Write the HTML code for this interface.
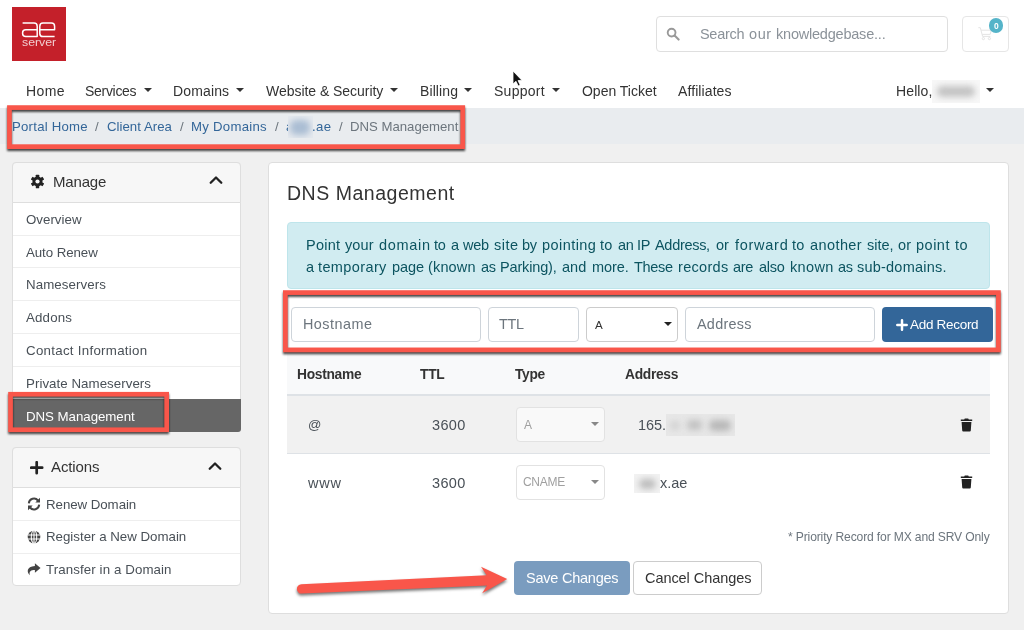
<!DOCTYPE html>
<html><head><meta charset="utf-8">
<style>
*{box-sizing:border-box;margin:0;padding:0}
html,body{width:1024px;height:630px;overflow:hidden}
body{font-family:"Liberation Sans",sans-serif;background:#f0f0f0;position:relative;color:#333}
.a,.t,svg{position:absolute}
.t{white-space:nowrap;will-change:transform}
.caret{width:0;height:0;border-left:4.3px solid transparent;border-right:4.3px solid transparent;border-top:4.6px solid #333}
.red{border:4.7px solid #f9564a;filter:drop-shadow(0.6px 2.2px 1.6px rgba(0,0,0,.75))}
.card{background:#fff;border:1px solid #dedede;border-radius:4px}
.ch{background:#f7f7f7;border:1px solid #dedede;border-radius:4px 4px 0 0}
.sep{height:1px;background:#eee;left:13px;width:227.2px}
.inp{background:#fff;border:1px solid #ced4da;border-radius:4px}
.blur{filter:blur(3px)}.bp{overflow:hidden}
</style></head><body>
<!-- header -->
<div class="a" style="left:0;top:0;width:1024px;height:108px;background:#fff"></div>
<div class="a" style="left:11.8px;top:6.9px;width:53.8px;height:53.8px;background:#c4202a"></div>
<svg style="left:0;top:0" width="80" height="70" viewBox="0 0 80 70" fill="none" stroke="#fff" stroke-width="1.5" stroke-linejoin="round">
<path d="M22.6,23.1 H34 Q37.2,23.1 37.2,26.3 V36.6 H25.8 Q22.6,36.6 22.6,33.6 V32.7 Q22.6,29.7 25.8,29.7 H37.2"/>
<path d="M54.6,36.6 H43 Q39.8,36.6 39.8,33.4 V26.3 Q39.8,23.1 43,23.1 H51.4 Q54.6,23.1 54.6,26.3 V29.7 H39.8"/>
</svg>
<div class="t" style="left:21.7px;top:35.9px;font-size:10.8px;line-height:12px;color:#fff;letter-spacing:0px;opacity:.78;transform-origin:0 0;transform:scale(1.14,1)">server</div>
<!-- search -->
<div class="a inp" style="left:655.7px;top:16px;width:292px;height:36px;border-color:#dfdfdf"></div>
<svg style="left:666px;top:27px" width="14" height="14" viewBox="0 0 14 14"><circle cx="5.6" cy="5.6" r="3.9" fill="none" stroke="#999" stroke-width="1.9"/><path d="M8.6,8.6 L12.6,12.6" stroke="#999" stroke-width="2.1" stroke-linecap="round"/></svg>
<div class="a inp" style="left:962px;top:16px;width:47px;height:36px;border-color:#e6e6e6"></div>
<svg style="left:975px;top:24px" width="20" height="18" viewBox="975 24 20 18" fill="none" stroke="#e4e4e4" stroke-width="1"><path d="M978.3,27.7 H980.3 L982.6,36.4 H990.4 M981,30.2 H991.3 L990.2,34.4 H982.1"/><circle cx="983.4" cy="38.6" r="1.1"/><circle cx="989.4" cy="38.6" r="1.1"/></svg>
<div class="a" style="left:989.3px;top:18.4px;width:14.2px;height:14.2px;border-radius:7.1px;background:#55b4c9"></div>
<!-- carets -->
<div class="a caret" style="left:144.2px;top:88.3px"></div>
<div class="a caret" style="left:235.7px;top:88.3px"></div>
<div class="a caret" style="left:390.3px;top:88.3px"></div>
<div class="a caret" style="left:464.1px;top:88.3px"></div>
<div class="a caret" style="left:551.5px;top:88.3px"></div>
<div class="a caret" style="left:985.8px;top:88.3px"></div>
<!-- cursor -->
<svg style="left:511px;top:69.3px" width="14" height="20" viewBox="0 0 14 20"><path d="M2,2 L2,15 L5,12.3 L7.2,17 L9.2,16 L7,11.6 L11,11.4 Z" fill="#111" stroke="#fff" stroke-width="0.8"/></svg>
<!-- breadcrumb -->
<div class="a" style="left:0;top:107.7px;width:1024px;height:36.2px;background:#e9ecef"></div>
<!-- sidebar card 1 -->
<div class="a card" style="left:12px;top:162.3px;width:229.2px;height:270px"></div>
<div class="a ch" style="left:12px;top:162.3px;width:229.2px;height:40.5px"></div>
<div class="a sep" style="top:234.6px"></div>
<div class="a sep" style="top:267.3px"></div>
<div class="a sep" style="top:300.1px"></div>
<div class="a sep" style="top:332.9px"></div>
<div class="a sep" style="top:365.8px"></div>
<div class="a" style="left:12px;top:399.2px;width:229.2px;height:32.4px;background:#666;border-radius:0 0 3px 3px"></div>
<!-- gear -->
<svg style="left:30px;top:174px" width="15" height="15" viewBox="-7.5 -7.5 15 15"><g fill="#222"><circle r="5"/><g id="tth"><rect x="-1.7" y="-6.8" width="3.4" height="13.6" rx="0.6"/></g><use href="#tth" transform="rotate(60)"/><use href="#tth" transform="rotate(120)"/></g><circle r="2.1" fill="#f7f7f7"/></svg>
<!-- chevrons -->
<svg style="left:208.6px;top:174.9px" width="14" height="10" viewBox="0 0 14 10"><path d="M1.7,7.8 L7,2.5 L12.3,7.8" fill="none" stroke="#222" stroke-width="2.3" stroke-linecap="round" stroke-linejoin="round"/></svg>
<!-- actions card -->
<div class="a card" style="left:12px;top:447.3px;width:229.2px;height:139px"></div>
<div class="a ch" style="left:12px;top:447.3px;width:229.2px;height:40.4px"></div>
<div class="a sep" style="top:519.8px"></div>
<div class="a sep" style="top:552.8px"></div>
<svg style="left:30px;top:460.7px" width="14" height="14" viewBox="0 0 14 14"><path d="M6.7,1.2V12.2M1.2,6.7H12.2" stroke="#222" stroke-width="2.7" stroke-linecap="round"/></svg>
<svg style="left:208.4px;top:460.9px" width="14" height="10" viewBox="0 0 14 10"><path d="M1.7,7.8 L7,2.5 L12.3,7.8" fill="none" stroke="#222" stroke-width="2.3" stroke-linecap="round" stroke-linejoin="round"/></svg>
<!-- action icons -->
<svg style="left:27px;top:497.2px" width="14" height="14" viewBox="0 0 14 14" fill="none" stroke="#444" stroke-width="2"><path d="M1.8,6.3 A5.2,5.2 0 0 1 11,3.5"/><path d="M12.2,7.7 A5.2,5.2 0 0 1 3,10.5"/><path d="M13,0.7 V5.4 H8.3Z" fill="#444" stroke="none"/><path d="M1,13.3 V8.6 H5.7Z" fill="#444" stroke="none"/></svg>
<svg style="left:26.5px;top:529.5px" width="14" height="14" viewBox="0 0 14 14"><circle cx="7" cy="7" r="6.3" fill="#444"/><g fill="none" stroke="#fff" stroke-width="1.05"><ellipse cx="7" cy="7" rx="2.7" ry="6.3"/><path d="M0.7,5H13.3M0.7,9H13.3M7,0.7V13.3"/></g></svg>
<svg style="left:26px;top:562.2px" width="15.2" height="15.2" viewBox="0 0 14 14"><path d="M8.2,1.2 L13.4,5.6 L8.2,10 V7.4 C4.6,7.4 2.6,8.6 3.6,12.3 C0.6,10 0.2,4.1 8.2,3.8 Z" fill="#444"/></svg>
<!-- main card -->
<div class="a card" style="left:268px;top:162.3px;width:741px;height:451.8px"></div>
<div class="a" style="left:286.5px;top:222px;width:703px;height:67px;background:#d1ecf1;border:1px solid #bee5eb;border-radius:4px"></div>
<!-- form -->
<div class="a inp" style="left:291px;top:306.6px;width:190px;height:35px"></div>
<div class="a inp" style="left:488px;top:306.6px;width:91.3px;height:35px"></div>
<div class="a inp" style="left:585.7px;top:306.6px;width:92.5px;height:35px;border-color:#ccc"></div>
<div class="a caret" style="left:663.6px;top:322.3px;border-top-color:#222"></div>
<div class="a inp" style="left:685px;top:306.6px;width:190.4px;height:35px"></div>
<div class="a" style="left:882px;top:306.6px;width:110.5px;height:35px;background:#336699;border-radius:4px"></div>
<svg style="left:896.4px;top:318.7px" width="12" height="12" viewBox="0 0 12 12"><path d="M6,1.3V10.7M1.3,6H10.7" stroke="#fff" stroke-width="2.5" stroke-linecap="round"/></svg>
<!-- table -->
<div class="a" style="left:286.5px;top:353px;width:703.3px;height:41.5px;background:#f8f9fa"></div>
<div class="a" style="left:286.5px;top:394px;width:703.3px;height:2px;background:#dee2e6"></div>
<div class="a" style="left:286.5px;top:396px;width:703.3px;height:57px;background:#f1f1f1"></div>
<div class="a" style="left:286.5px;top:453px;width:703.3px;height:1px;background:#dee2e6"></div>
<div class="a inp" style="left:515.7px;top:407.2px;width:89.3px;height:35px;border-color:#e2e2e2;background:#f9f9f9"></div>
<div class="a inp" style="left:515.7px;top:464.6px;width:89.3px;height:35.2px;border-color:#e2e2e2"></div>
<div class="a caret" style="left:590.8px;top:422px;border-top-color:#888;border-left-width:4.6px;border-right-width:4.6px"></div>
<div class="a caret" style="left:590.8px;top:479.5px;border-top-color:#888;border-left-width:4.6px;border-right-width:4.6px"></div>
<svg style="left:959.8px;top:417.5px" width="13" height="14" viewBox="0 0 13 14"><path d="M0.8,1.6 H4.2 L4.8,0.5 H8.2 L8.8,1.6 H12.2 V3 H0.8Z M1.6,3.9 H11.4 L10.8,12.6 Q10.7,13.5 9.8,13.5 H3.2 Q2.3,13.5 2.2,12.6Z" fill="#222"/></svg>
<svg style="left:959.8px;top:474.8px" width="13" height="14" viewBox="0 0 13 14"><path d="M0.8,1.6 H4.2 L4.8,0.5 H8.2 L8.8,1.6 H12.2 V3 H0.8Z M1.6,3.9 H11.4 L10.8,12.6 Q10.7,13.5 9.8,13.5 H3.2 Q2.3,13.5 2.2,12.6Z" fill="#222"/></svg>
<!-- buttons -->
<div class="a" style="left:514px;top:560.6px;width:115.8px;height:34.4px;background:#7a9cbf;border-radius:4px"></div>
<div class="a inp" style="left:633.4px;top:560.6px;width:128.6px;height:34.4px;border-color:#ccc"></div>
<div class="t" style="left:26.25px;top:83.00px;font-size:14px;line-height:17px;color:#333;font-weight:400;letter-spacing:0.367px">Home</div>
<div class="t" style="left:85.22px;top:83.00px;font-size:14px;line-height:17px;color:#333;font-weight:400;letter-spacing:-0.300px">Services</div>
<div class="t" style="left:173.00px;top:83.00px;font-size:14px;line-height:17px;color:#333;font-weight:400;letter-spacing:0.142px">Domains</div>
<div class="t" style="left:266.00px;top:83.00px;font-size:14px;line-height:17px;color:#333;font-weight:400;letter-spacing:-0.038px">Website &amp; Security</div>
<div class="t" style="left:419.75px;top:83.00px;font-size:14px;line-height:17px;color:#333;font-weight:400;letter-spacing:0.100px">Billing</div>
<div class="t" style="left:493.50px;top:83.00px;font-size:14px;line-height:17px;color:#333;font-weight:400;letter-spacing:0.267px">Support</div>
<div class="t" style="left:581.50px;top:83.00px;font-size:14px;line-height:17px;color:#333;font-weight:400;letter-spacing:-0.015px">Open Ticket</div>
<div class="t" style="left:677.50px;top:83.00px;font-size:14px;line-height:17px;color:#333;font-weight:400;letter-spacing:0.094px">Affiliates</div>
<div class="t" style="left:895.50px;top:83.00px;font-size:14px;line-height:17px;color:#333;font-weight:400;letter-spacing:0.120px">Hello,</div>
<div class="t" style="left:12.00px;top:119.00px;font-size:13.2px;line-height:16px;color:#369;font-weight:400;letter-spacing:0.235px">Portal Home</div>
<div class="t" style="left:95.00px;top:119.00px;font-size:13.2px;line-height:16px;color:#6c757d;font-weight:400;letter-spacing:0.000px">/</div>
<div class="t" style="left:106.75px;top:119.00px;font-size:13.2px;line-height:16px;color:#369;font-weight:400;letter-spacing:0.035px">Client Area</div>
<div class="t" style="left:179.50px;top:119.00px;font-size:13.2px;line-height:16px;color:#6c757d;font-weight:400;letter-spacing:0.000px">/</div>
<div class="t" style="left:191.25px;top:119.00px;font-size:13.2px;line-height:16px;color:#369;font-weight:400;letter-spacing:0.261px">My Domains</div>
<div class="t" style="left:274.75px;top:119.00px;font-size:13.2px;line-height:16px;color:#6c757d;font-weight:400;letter-spacing:0.000px">/</div>
<div class="t" style="left:285.50px;top:119.00px;font-size:13.2px;line-height:16px;color:#369;font-weight:400;letter-spacing:0.000px">a</div>
<div class="t" style="left:312.00px;top:119.00px;font-size:13.2px;line-height:16px;color:#369;font-weight:400;letter-spacing:0.425px">.ae</div>
<div class="t" style="left:338.50px;top:119.00px;font-size:13.2px;line-height:16px;color:#6c757d;font-weight:400;letter-spacing:0.000px">/</div>
<div class="t" style="left:350.25px;top:119.00px;font-size:13.2px;line-height:16px;color:#6c757d;font-weight:400;letter-spacing:-0.012px">DNS Management</div>
<div class="t" style="left:52.50px;top:173.00px;font-size:15px;line-height:18px;color:#333;font-weight:400;letter-spacing:-0.180px">Manage</div>
<div class="t" style="left:51.25px;top:458.00px;font-size:15px;line-height:18px;color:#333;font-weight:400;letter-spacing:-0.108px">Actions</div>
<div class="t" style="left:26.25px;top:212.00px;font-size:13.3px;line-height:16px;color:#495057;font-weight:400;letter-spacing:0.014px">Overview</div>
<div class="t" style="left:26.25px;top:245.00px;font-size:13.3px;line-height:16px;color:#495057;font-weight:400;letter-spacing:-0.072px">Auto Renew</div>
<div class="t" style="left:26.25px;top:277.00px;font-size:13.3px;line-height:16px;color:#495057;font-weight:400;letter-spacing:0.085px">Nameservers</div>
<div class="t" style="left:26.25px;top:310.00px;font-size:13.3px;line-height:16px;color:#495057;font-weight:400;letter-spacing:0.170px">Addons</div>
<div class="t" style="left:26.25px;top:343.00px;font-size:13.3px;line-height:16px;color:#495057;font-weight:400;letter-spacing:0.283px">Contact Information</div>
<div class="t" style="left:26.25px;top:376.00px;font-size:13.3px;line-height:16px;color:#495057;font-weight:400;letter-spacing:0.047px">Private Nameservers</div>
<div class="t" style="left:26.25px;top:409.00px;font-size:13.3px;line-height:16px;color:#fff;font-weight:400;letter-spacing:-0.050px">DNS Management</div>
<div class="t" style="left:46.25px;top:497.00px;font-size:13.3px;line-height:16px;color:#495057;font-weight:400;letter-spacing:-0.059px">Renew Domain</div>
<div class="t" style="left:46.25px;top:529.00px;font-size:13.3px;line-height:16px;color:#495057;font-weight:400;letter-spacing:-0.008px">Register a New Domain</div>
<div class="t" style="left:46.25px;top:562.00px;font-size:13.3px;line-height:16px;color:#495057;font-weight:400;letter-spacing:0.097px">Transfer in a Domain</div>
<div class="t" style="left:287.00px;top:182.00px;font-size:19.5px;line-height:23px;color:#333;font-weight:400;letter-spacing:0.523px">DNS Management</div>
<div class="t" style="left:305.90px;top:237.00px;font-size:14.5px;line-height:17px;color:#0c5460;font-weight:400;letter-spacing:0.225px">Point</div>
<div class="t" style="left:344.50px;top:237.00px;font-size:14.5px;line-height:17px;color:#0c5460;font-weight:400;letter-spacing:0.100px">your</div>
<div class="t" style="left:378.50px;top:237.00px;font-size:14.5px;line-height:17px;color:#0c5460;font-weight:400;letter-spacing:0.680px">domain</div>
<div class="t" style="left:433.60px;top:237.00px;font-size:14.5px;line-height:17px;color:#0c5460;font-weight:400;letter-spacing:-0.300px">to</div>
<div class="t" style="left:450.70px;top:237.00px;font-size:14.5px;line-height:17px;color:#0c5460;font-weight:400;letter-spacing:0.000px">a</div>
<div class="t" style="left:462.90px;top:237.00px;font-size:14.5px;line-height:17px;color:#0c5460;font-weight:400;letter-spacing:-0.250px">web</div>
<div class="t" style="left:494.00px;top:237.00px;font-size:14.5px;line-height:17px;color:#0c5460;font-weight:400;letter-spacing:0.500px">site</div>
<div class="t" style="left:522.05px;top:237.00px;font-size:14.5px;line-height:17px;color:#0c5460;font-weight:400;letter-spacing:-0.300px">by</div>
<div class="t" style="left:542.20px;top:237.00px;font-size:14.5px;line-height:17px;color:#0c5460;font-weight:400;letter-spacing:0.443px">pointing</div>
<div class="t" style="left:600.30px;top:237.00px;font-size:14.5px;line-height:17px;color:#0c5460;font-weight:400;letter-spacing:0.200px">to</div>
<div class="t" style="left:617.65px;top:237.00px;font-size:14.5px;line-height:17px;color:#0c5460;font-weight:400;letter-spacing:-0.300px">an</div>
<div class="t" style="left:636.90px;top:237.00px;font-size:14.5px;line-height:17px;color:#0c5460;font-weight:400;letter-spacing:-0.300px">IP</div>
<div class="t" style="left:654.65px;top:237.00px;font-size:14.5px;line-height:17px;color:#0c5460;font-weight:400;letter-spacing:-0.300px">Address,</div>
<div class="t" style="left:716.30px;top:237.00px;font-size:14.5px;line-height:17px;color:#0c5460;font-weight:400;letter-spacing:-0.100px">or</div>
<div class="t" style="left:735.10px;top:237.00px;font-size:14.5px;line-height:17px;color:#0c5460;font-weight:400;letter-spacing:0.733px">forward</div>
<div class="t" style="left:792.20px;top:237.00px;font-size:14.5px;line-height:17px;color:#0c5460;font-weight:400;letter-spacing:0.200px">to</div>
<div class="t" style="left:809.80px;top:237.00px;font-size:14.5px;line-height:17px;color:#0c5460;font-weight:400;letter-spacing:0.417px">another</div>
<div class="t" style="left:866.50px;top:237.00px;font-size:14.5px;line-height:17px;color:#0c5460;font-weight:400;letter-spacing:-0.000px">site,</div>
<div class="t" style="left:898.10px;top:237.00px;font-size:14.5px;line-height:17px;color:#0c5460;font-weight:400;letter-spacing:0.100px">or</div>
<div class="t" style="left:916.40px;top:237.00px;font-size:14.5px;line-height:17px;color:#0c5460;font-weight:400;letter-spacing:0.500px">point</div>
<div class="t" style="left:955.10px;top:237.00px;font-size:14.5px;line-height:17px;color:#0c5460;font-weight:400;letter-spacing:0.400px">to</div>
<div class="t" style="left:305.90px;top:259.00px;font-size:14.5px;line-height:17px;color:#0c5460;font-weight:400;letter-spacing:0.000px">a</div>
<div class="t" style="left:317.60px;top:259.00px;font-size:14.5px;line-height:17px;color:#0c5460;font-weight:400;letter-spacing:0.387px">temporary</div>
<div class="t" style="left:391.90px;top:259.00px;font-size:14.5px;line-height:17px;color:#0c5460;font-weight:400;letter-spacing:-0.067px">page</div>
<div class="t" style="left:428.40px;top:259.00px;font-size:14.5px;line-height:17px;color:#0c5460;font-weight:400;letter-spacing:0.160px">(known</div>
<div class="t" style="left:481.30px;top:259.00px;font-size:14.5px;line-height:17px;color:#0c5460;font-weight:400;letter-spacing:-0.300px">as</div>
<div class="t" style="left:500.40px;top:259.00px;font-size:14.5px;line-height:17px;color:#0c5460;font-weight:400;letter-spacing:-0.150px">Parking),</div>
<div class="t" style="left:562.10px;top:259.00px;font-size:14.5px;line-height:17px;color:#0c5460;font-weight:400;letter-spacing:0.050px">and</div>
<div class="t" style="left:591.60px;top:259.00px;font-size:14.5px;line-height:17px;color:#0c5460;font-weight:400;letter-spacing:-0.075px">more.</div>
<div class="t" style="left:634.25px;top:259.00px;font-size:14.5px;line-height:17px;color:#0c5460;font-weight:400;letter-spacing:-0.300px">These</div>
<div class="t" style="left:678.10px;top:259.00px;font-size:14.5px;line-height:17px;color:#0c5460;font-weight:400;letter-spacing:0.317px">records</div>
<div class="t" style="left:733.40px;top:259.00px;font-size:14.5px;line-height:17px;color:#0c5460;font-weight:400;letter-spacing:-0.300px">are</div>
<div class="t" style="left:758.75px;top:259.00px;font-size:14.5px;line-height:17px;color:#0c5460;font-weight:400;letter-spacing:-0.300px">also</div>
<div class="t" style="left:789.80px;top:259.00px;font-size:14.5px;line-height:17px;color:#0c5460;font-weight:400;letter-spacing:0.350px">known</div>
<div class="t" style="left:838.05px;top:259.00px;font-size:14.5px;line-height:17px;color:#0c5460;font-weight:400;letter-spacing:-0.300px">as</div>
<div class="t" style="left:857.30px;top:259.00px;font-size:14.5px;line-height:17px;color:#0c5460;font-weight:400;letter-spacing:0.218px">sub-domains.</div>
<div class="t" style="left:303.25px;top:316.00px;font-size:14.4px;line-height:17px;color:#6c757d;font-weight:400;letter-spacing:0.479px">Hostname</div>
<div class="t" style="left:499.10px;top:316.00px;font-size:14.4px;line-height:17px;color:#6c757d;font-weight:400;letter-spacing:-0.300px">TTL</div>
<div class="t" style="left:594.70px;top:318.00px;font-size:11.6px;line-height:14px;color:#333;font-weight:400;letter-spacing:0.000px">A</div>
<div class="t" style="left:696.50px;top:316.00px;font-size:14.4px;line-height:17px;color:#6c757d;font-weight:400;letter-spacing:0.267px">Address</div>
<div class="t" style="left:909.55px;top:317.00px;font-size:13.5px;line-height:16px;color:#fff;font-weight:400;letter-spacing:-0.300px">Add Record</div>
<div class="t" style="left:297.23px;top:366.00px;font-size:13.8px;line-height:17px;color:#333;font-weight:700;letter-spacing:-0.300px">Hostname</div>
<div class="t" style="left:420.35px;top:366.00px;font-size:13.8px;line-height:17px;color:#333;font-weight:700;letter-spacing:-0.300px">TTL</div>
<div class="t" style="left:515.38px;top:366.00px;font-size:13.8px;line-height:17px;color:#333;font-weight:700;letter-spacing:-0.300px">Type</div>
<div class="t" style="left:625.20px;top:366.00px;font-size:13.8px;line-height:17px;color:#333;font-weight:700;letter-spacing:-0.300px">Address</div>
<div class="t" style="left:308.00px;top:417.00px;font-size:13.2px;line-height:16px;color:#495057;font-weight:400;letter-spacing:0.000px">@</div>
<div class="t" style="left:432.25px;top:417.00px;font-size:14.5px;line-height:17px;color:#495057;font-weight:400;letter-spacing:0.367px">3600</div>
<div class="t" style="left:637.60px;top:417.00px;font-size:14.5px;line-height:17px;color:#495057;font-weight:400;letter-spacing:-0.067px">165.</div>
<div class="t" style="left:308.00px;top:475.00px;font-size:14.5px;line-height:17px;color:#495057;font-weight:400;letter-spacing:0.800px">www</div>
<div class="t" style="left:432.25px;top:475.00px;font-size:14.5px;line-height:17px;color:#495057;font-weight:400;letter-spacing:0.367px">3600</div>
<div class="t" style="left:660.00px;top:475.00px;font-size:14.5px;line-height:17px;color:#495057;font-weight:400;letter-spacing:-0.050px">x.ae</div>
<div class="t" style="left:523.90px;top:418.00px;font-size:12px;line-height:14px;color:#a0a0a0;font-weight:400;letter-spacing:0.000px">A</div>
<div class="t" style="left:522.75px;top:475.00px;font-size:12px;line-height:14px;color:#a0a0a0;font-weight:400;letter-spacing:-0.300px">CNAME</div>
<div class="t" style="left:788.20px;top:530.00px;font-size:12.1px;line-height:15px;color:#6c757d;font-weight:400;letter-spacing:-0.142px">* Priority Record for MX and SRV Only</div>
<div class="t" style="left:525.60px;top:570.00px;font-size:14.5px;line-height:17px;color:#fff;font-weight:400;letter-spacing:-0.227px">Save Changes</div>
<div class="t" style="left:645.00px;top:570.00px;font-size:14.5px;line-height:17px;color:#333;font-weight:400;letter-spacing:-0.062px">Cancel Changes</div>
<div class="t" style="left:700.05px;top:26.00px;font-size:14.5px;line-height:17px;color:#8b9299;font-weight:400;letter-spacing:-0.300px">Search</div>
<div class="t" style="left:748.75px;top:26.00px;font-size:14.5px;line-height:17px;color:#8b9299;font-weight:400;letter-spacing:0.575px">our</div>
<div class="t" style="left:775.80px;top:26.00px;font-size:14.5px;line-height:17px;color:#8b9299;font-weight:400;letter-spacing:-0.213px">knowledgebase...</div>
<div class="t" style="left:994.00px;top:21.00px;font-size:8.5px;line-height:10px;color:#fff;font-weight:700;letter-spacing:0.000px">0</div>
<!-- blurs -->
<div class="a bp" style="left:932px;top:79.5px;width:47.8px;height:23px;background:#f7f7f7"><div class="a blur" style="left:5px;top:6px;width:38px;height:11px;background:#c3c3c3;border-radius:5px"></div></div>
<div class="a bp" style="left:287.6px;top:115.8px;width:25.2px;height:22.2px;background:#e5e9ee"><div class="a blur" style="left:2px;top:4.5px;width:20px;height:15px;background:#aabdd3;border-radius:6px"></div></div>
<div class="a bp" style="left:665.7px;top:414.3px;width:69.3px;height:22px;background:#e7e7e7"><div class="a blur" style="left:4px;top:6.5px;width:10px;height:9px;background:#d2d2d2;border-radius:4px"></div><div class="a blur" style="left:21px;top:6px;width:15px;height:10px;background:#c2c2c2;border-radius:4px"></div><div class="a blur" style="left:43px;top:5.5px;width:22px;height:11px;background:#b8b8b8;border-radius:5px"></div></div>
<div class="a bp" style="left:634.3px;top:474.3px;width:25.7px;height:19px;background:#f2f2f2"><div class="a blur" style="left:5px;top:5px;width:17px;height:10px;background:#bcbcbc;border-radius:5px"></div></div>
<!-- red boxes -->
<svg style="left:0;top:0;filter:drop-shadow(0.6px 2.1px 1.3px rgba(0,0,0,.72))" width="1024" height="630" viewBox="0 0 1024 630" fill="none" stroke="#f9564a" stroke-width="4.7">
<rect x="9.45" y="107.60" width="453.30" height="39.05"/>
<rect x="10.55" y="394.25" width="156.10" height="35.50"/>
<rect x="285.35" y="292.60" width="713.05" height="57.30"/>
</svg>
<!-- arrow -->
<svg style="left:280px;top:555px;filter:drop-shadow(0.8px 2.4px 1.8px rgba(0,0,0,.55))" width="240" height="50" viewBox="280 555 240 50"><path d="M301.3,584.3 L486.6,575.2 L481,566.8 L507.2,578.9 L482.2,593.2 L487,585.6 L301.8,593.6 A4.65,4.65 0 0 1 301.3,584.3Z" fill="#f9564a"/></svg>
</body></html>
